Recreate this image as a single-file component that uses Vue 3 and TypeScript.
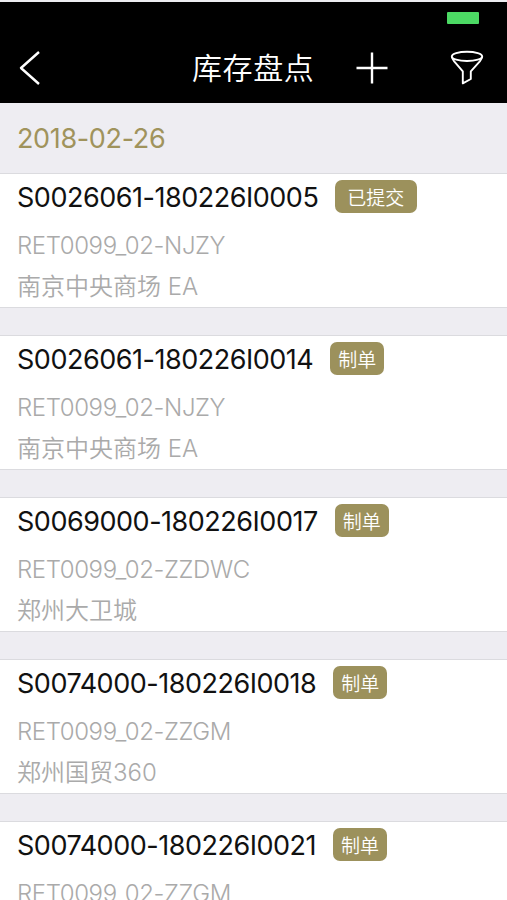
<script setup lang="ts">
interface StockCount {
  code: string
  status: string
  submitted?: boolean
  warehouse: string
  store: string
}

const title = '库存盘点'
const date = '2018-02-26'

const records: StockCount[] = [
  { code: 'S0026061-180226I0005', status: '已提交', submitted: true, warehouse: 'RET0099_02-NJZY', store: '南京中央商场 EA' },
  { code: 'S0026061-180226I0014', status: '制单', warehouse: 'RET0099_02-NJZY', store: '南京中央商场 EA' },
  { code: 'S0069000-180226I0017', status: '制单', warehouse: 'RET0099_02-ZZDWC', store: '郑州大卫城' },
  { code: 'S0074000-180226I0018', status: '制单', warehouse: 'RET0099_02-ZZGM', store: '郑州国贸360' },
  { code: 'S0074000-180226I0021', status: '制单', warehouse: 'RET0099_02-ZZGM', store: '郑州国贸360' },
]
</script>

<template>
  <div class="screen">
    <header class="header">
      <div class="status-bar"><span class="battery"></span></div>
      <nav class="nav">
        <button class="icon-button back" aria-label="返回">
          <svg width="22" height="36" viewBox="0 0 22 36"><path d="M20 2 2 18 20 34" /></svg>
        </button>
        <h1 class="title">{{ title }}</h1>
        <button class="icon-button add" aria-label="新增">
          <svg width="32" height="32" viewBox="0 0 32 32"><path d="M16 0.5V31.5M0.5 16H31.5" /></svg>
        </button>
        <button class="icon-button filter" aria-label="筛选">
          <svg width="34" height="36" viewBox="0 0 34 36">
            <ellipse cx="17" cy="6.4" rx="15.2" ry="4.6" />
            <path d="M1.8 6.6C2.2 8.6 3 9.8 4.2 11.4L12.8 21.3V33.4L20.8 29V21.3L29.8 11.4C31 9.8 31.8 8.6 32.2 6.6" />
          </svg>
        </button>
      </nav>
    </header>
    <div class="date">{{ date }}</div>
    <main class="list">
      <article v-for="record in records" :key="record.code" class="card">
        <div class="card-head">
          <span class="code">{{ record.code }}</span>
          <span class="badge" :class="{ submitted: record.submitted }">{{ record.status }}</span>
        </div>
        <div class="detail warehouse">{{ record.warehouse }}</div>
        <div class="detail store">{{ record.store }}</div>
      </article>
    </main>
  </div>
</template>

<style>
body {
  margin: 0;
  overflow: hidden;
}
</style>

<style scoped>
.screen {
  box-sizing: border-box;
  width: 100%;
  height: 900px;
  overflow: hidden;
  border-top: 2px solid #ececf0;
  background: #eeedf2;
  font-family: Inter, "Noto Sans CJK SC", sans-serif;
}

.header {
  height: 101px;
  background: #000;
}

.status-bar {
  display: flex;
  box-sizing: border-box;
  height: 32px;
  justify-content: flex-end;
  padding: 10px 28px 0 0;
}

.battery {
  width: 32px;
  height: 12px;
  border-radius: 1px;
  background: #4cd964;
}

.nav {
  display: flex;
  height: 68px;
  align-items: center;
  padding: 0 23px 0 19px;
}

.icon-button {
  display: flex;
  padding: 0;
  border: 0;
  background: none;
}

.icon-button svg {
  fill: none;
  stroke: #fff;
  stroke-width: 2.4;
  stroke-linejoin: round;
}

.icon-button.filter svg {
  stroke-width: 1.9;
}

.title {
  margin: 0 42px 0 151px;
  color: #fff;
  font-size: 30px;
  font-weight: 350;
  line-height: 42px;
  letter-spacing: 0.6px;
  white-space: nowrap;
}

.filter {
  margin-left: auto;
}

.date {
  height: 70px;
  padding-left: 17px;
  color: #a0935c;
  font-size: 27px;
  letter-spacing: -0.35px;
  line-height: 71px;
}

.list {
  display: flex;
  flex-direction: column;
  gap: 27px;
}

.card {
  box-sizing: border-box;
  height: 135px;
  flex: none;
  padding: 6px 17px 0;
  border-top: 1px solid #dbdbdf;
  border-bottom: 1px solid #dbdbdf;
  background: #fff;
}

.card-head {
  display: flex;
  height: 35px;
  align-items: center;
  gap: 17px;
  margin-bottom: 11px;
}

.code {
  color: #111;
  font-size: 27px;
  letter-spacing: -0.48px;
  line-height: 35px;
}

.badge {
  height: 33px;
  box-sizing: border-box;
  margin-bottom: 2px;
  padding: 0 8px;
  border-radius: 7px;
  background: #9c915c;
  color: #fff;
  font-size: 19px;
  font-weight: 350;
  line-height: 37px;
}

.badge.submitted {
  padding: 0 13px 0 12px;
}

.detail {
  height: 40px;
  color: #aaa;
  font-size: 24px;
  font-weight: 350;
  line-height: 40px;
  white-space: nowrap;
}

.warehouse {
  letter-spacing: -0.4px;
}

.store {
  line-height: 42px;
}
</style>
